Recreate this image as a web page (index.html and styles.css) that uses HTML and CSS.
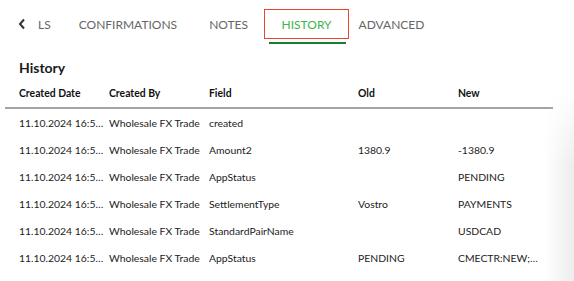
FILE: index.html
```html
<!DOCTYPE html>
<html lang="en">
<head>
  <meta charset="UTF-8">
  <meta name="viewport" content="width=device-width, initial-scale=1.0">
  <title>History</title>
  <link rel="stylesheet" href="styles.css">
</head>

<body>
  <div class="panel">
    <nav class="tabs">
      <span class="back">
        <svg width="8" height="12" viewBox="0 0 8 12"><path d="M6 1.5 L2 6 L6 10.5" fill="none" stroke="#333" stroke-width="2"/></svg>
      </span>
      <a class="tab tab-ls">LS</a>
      <a class="tab">CONFIRMATIONS</a>
      <a class="tab">NOTES</a>
      <a class="tab active">HISTORY</a>
      <a class="tab tab-adv">ADVANCED</a>
    </nav>

    <h2 class="title">History</h2>

    <table class="history">
      <colgroup>
        <col class="c-date">
        <col class="c-by">
        <col class="c-field">
        <col class="c-old">
        <col class="c-new">
      </colgroup>
      <thead>
        <tr>
          <th>Created Date</th>
          <th>Created By</th>
          <th>Field</th>
          <th>Old</th>
          <th>New</th>
        </tr>
      </thead>
      <tbody>
        <tr>
          <td>11.10.2024 16:54:12</td>
          <td>Wholesale FX Trade</td>
          <td>created</td>
          <td></td>
          <td></td>
        </tr>
        <tr>
          <td>11.10.2024 16:54:12</td>
          <td>Wholesale FX Trade</td>
          <td>Amount2</td>
          <td>1380.9</td>
          <td>-1380.9</td>
        </tr>
        <tr>
          <td>11.10.2024 16:54:12</td>
          <td>Wholesale FX Trade</td>
          <td>AppStatus</td>
          <td></td>
          <td>PENDING</td>
        </tr>
        <tr>
          <td>11.10.2024 16:54:12</td>
          <td>Wholesale FX Trade</td>
          <td>SettlementType</td>
          <td>Vostro</td>
          <td>PAYMENTS</td>
        </tr>
        <tr>
          <td>11.10.2024 16:54:12</td>
          <td>Wholesale FX Trade</td>
          <td>StandardPairName</td>
          <td></td>
          <td>USDCAD</td>
        </tr>
        <tr>
          <td>11.10.2024 16:54:12</td>
          <td>Wholesale FX Trade</td>
          <td>AppStatus</td>
          <td>PENDING</td>
          <td>CMECTR:NEW;PENDING</td>
        </tr>
      </tbody>
    </table>
    <div class="edge"></div>
  </div>
</body>
</html>
```

FILE: styles.css
```css
body {
  margin: 0;
  padding: 0;
  background: #fff;
  font-family: Lato, "Open Sans", sans-serif;
  color: #222;
}
.panel {
  position: relative;
  width: 574px;
  height: 281px;
  overflow: hidden;
}
/* tab bar */
.tabs {
  display: flex;
  align-items: center;
  height: 30px;
  padding: 9px 0 0 18px;
}
.back {
  display: flex;
  width: 8px;
}
.tab {
  position: relative;
  display: flex;
  align-items: center;
  height: 30px;
  padding: 0 16px;
  font-size: 12px;
  color: #666;
  white-space: nowrap;
  box-sizing: border-box;
}
.tab-ls {
  padding: 0 12px;
}
.tab-adv {
  margin-left: -6px;
}
.tab.active {
  color: #3db54a;
  border: 1.5px solid #e8452c;
  padding: 0 16px 0 16.5px;
}
.tab.active::after {
  content: "";
  position: absolute;
  left: 4px;
  right: 2px;
  bottom: -5.5px;
  height: 2px;
  background: #1e7a2f;
}
.title {
  margin: 20px 0 0 19px;
  font-size: 14px;
  font-weight: bold;
  color: #1a1a1a;
  line-height: 18px;
}
/* table */
.history {
  margin: 10px 0 0 5px;
  width: 548px;
  border-collapse: collapse;
  table-layout: fixed;
  font-size: 10.4px;
}
.c-date { width: 104px; }
.c-by { width: 100px; }
.c-field { width: 149px; }
.c-old { width: 100px; }
.c-new { width: 95px; }
th, td {
  padding: 0 4px 0 0;
  text-align: left;
  white-space: nowrap;
  overflow: hidden;
  text-overflow: ellipsis;
}
th:first-child, td:first-child {
  padding-left: 14px;
}
td:last-child {
  padding-right: 12px;
}
th {
  height: 20px;
  vertical-align: top;
  font-weight: bold;
  color: #111;
  border-bottom: 2px solid #a3a3a6;
}
td {
  height: 27px;
}
.edge {
  position: absolute;
  top: 90px;
  right: 0;
  width: 30px;
  height: 191px;
  background: linear-gradient(to right, rgba(235,235,235,0), rgba(235,235,235,0.9));
  -webkit-mask-image: linear-gradient(to bottom, transparent, #000 40%);
  mask-image: linear-gradient(to bottom, transparent, #000 40%);
}
```
